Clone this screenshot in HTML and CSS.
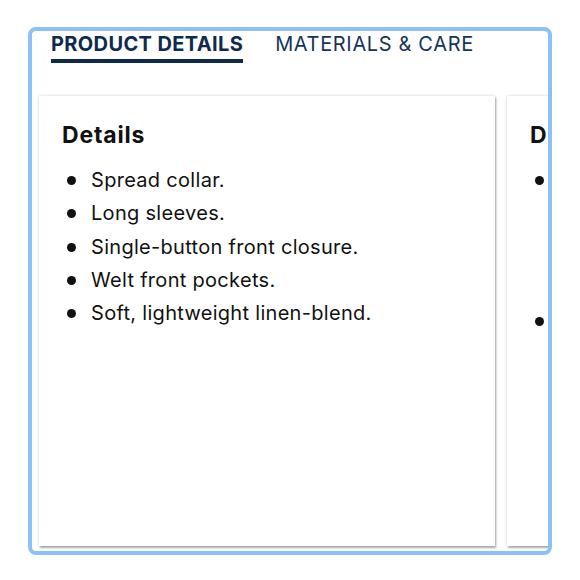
FILE: index.html
```html
<!DOCTYPE html>
<html lang="en">
<head>
<meta charset="utf-8">
<title>Product details</title>
<link rel="stylesheet" href="styles.css">
</head>
<body>
<div class="frame">
  <nav class="tabs">
    <span class="tab active">PRODUCT DETAILS</span>
    <span class="tab">MATERIALS &amp; CARE</span>
  </nav>
  <div class="cards">
    <section class="card">
      <h2 class="card-title">Details</h2>
      <ul class="list">
        <li>Spread collar.</li>
        <li>Long sleeves.</li>
        <li>Single-button front closure.</li>
        <li>Welt front pockets.</li>
        <li>Soft, lightweight linen-blend.</li>
      </ul>
    </section>
    <section class="card">
      <h2 class="card-title">Description</h2>
      <ul class="list">
        <li>Machine wash cold with like colors on a gentle cycle, using only non-chlorine bleach when needed; tumble dry low and remove promptly, warm iron if needed to keep it crisp.</li>
        <li>Imported.</li>
      </ul>
    </section>
  </div>
</div>
</body>
</html>
```
FILE: styles.css
```css
html, body {
  margin: 0;
  padding: 0;
  background: #ffffff;
}

body {
  font-family: "Inter", "Liberation Sans", sans-serif;
  color: #111111;
}

.frame {
  margin: 27px 0 0 28px;
  width: 524px;
  height: 528px;
  box-sizing: border-box;
  border: 4px solid #8dc0f8;
  border-radius: 8px;
  overflow: hidden;
  background: #ffffff;
}

.tabs {
  display: flex;
  gap: 32px;
  padding: 1px 0 0 19px;
}

.tab {
  display: block;
  font-size: 20px;
  line-height: 24px;
  padding-bottom: 3px;
  color: #15345a;
  font-weight: 400;
  letter-spacing: 0.65px;
}

.tab.active {
  font-weight: 700;
  color: #0e2b4e;
  border-bottom: 4px solid #0e2b4e;
  letter-spacing: 0.37px;
}

.cards {
  display: flex;
  gap: 12px;
  padding-left: 7px;
  margin-top: 33px;
}

.card {
  flex: 0 0 auto;
  width: 456px;
  height: 450px;
  box-sizing: border-box;
  padding: 25px 23px 0 23px;
  background: #ffffff;
  box-shadow: 0 0 3px rgba(0, 0, 0, 0.18), 1px 2px 2px rgba(0, 0, 0, 0.3);
}

.card-title {
  margin: 0;
  font-size: 23px;
  line-height: 28px;
  font-weight: 700;
  letter-spacing: 0.8px;
  color: #111111;
}

.list {
  list-style: none;
  margin: 18px 0 0 0;
  padding: 0;
}

.list li {
  display: flex;
  font-size: 20px;
  line-height: 27px;
  letter-spacing: 0.3px;
  margin-bottom: 6.3px;
}

.list li::before {
  content: "";
  flex: 0 0 auto;
  width: 9px;
  height: 9px;
  border-radius: 50%;
  background: #111111;
  margin: 9px 15px 0 5px;
}
```
